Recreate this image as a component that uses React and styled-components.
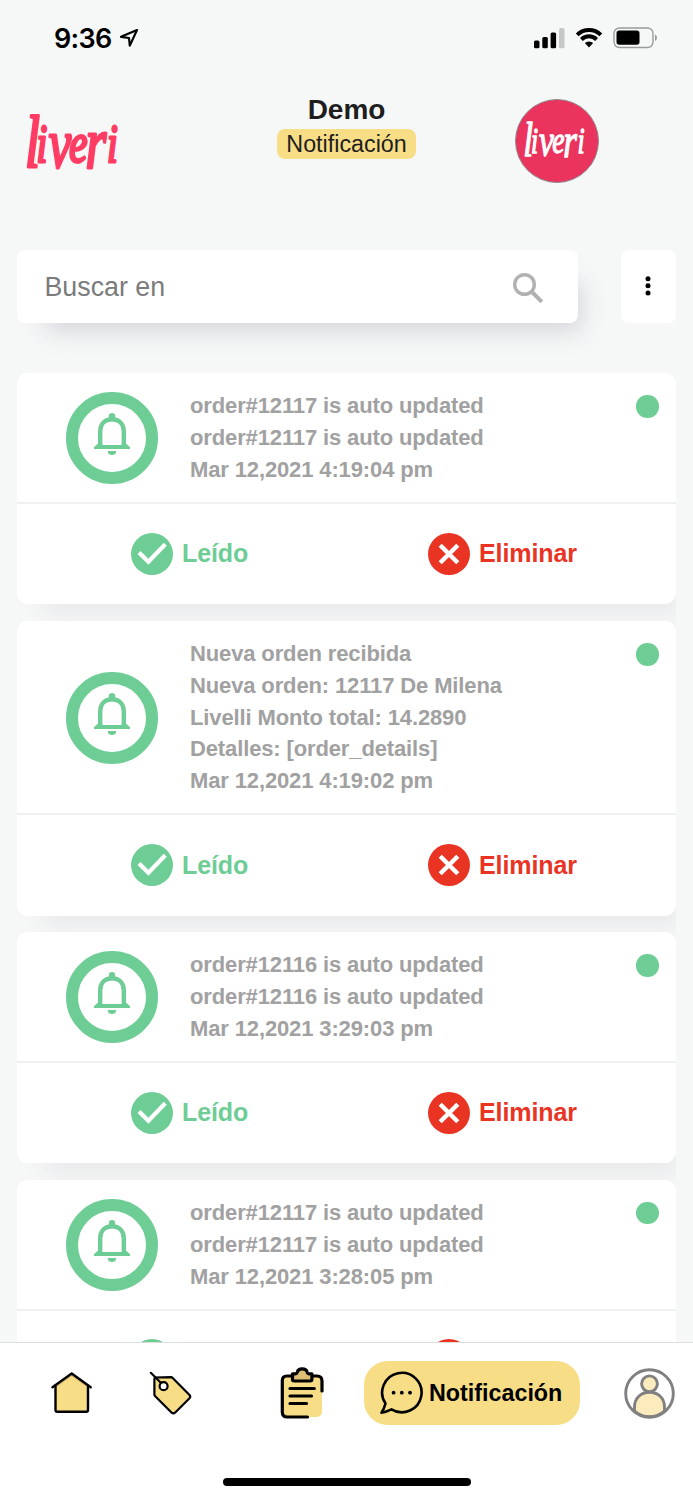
import React from 'react'
import styled, { createGlobalStyle, ThemeProvider } from 'styled-components'

const theme = {
  background: '#f6f8f8',
  green: '#6dcd95',
  red: '#e93323',
  yellow: '#f8dd87',
  pink: '#ff3d64',
  muted: '#a1a1a1',
}

const GlobalStyle = createGlobalStyle`
  * {
    box-sizing: border-box;
  }

  body {
    margin: 0;
    font-family: 'Liberation Sans', Arial, sans-serif;
  }

  svg {
    display: block;
    flex: none;
  }
`

const Screen = styled.div`
  display: flex;
  flex-direction: column;
  width: 693px;
  height: 1500px;
  overflow: hidden;
  background: ${({ theme }) => theme.background};
`

const StatusBar = styled.div`
  display: flex;
  align-items: center;
  justify-content: space-between;
  height: 77px;
  padding: 0 35px 1px 54px;
`

const Clock = styled.div`
  display: flex;
  align-items: center;
  gap: 7px;
  font-family: Inter, sans-serif;
  font-size: 27px;
  font-weight: 600;
  letter-spacing: -0.7px;
  color: #000;
`

const Header = styled.header`
  display: flex;
  align-items: flex-start;
  height: 172.7px;
  padding: 17px 0 0 20px;
`

const LogoBox = styled.div`
  width: 112px;
  padding-top: 14px;
`

const TitleBlock = styled.div`
  display: flex;
  flex-direction: column;
  align-items: center;
  width: 138.5px;
  margin-left: 145.3px;
`

const Title = styled.h1`
  margin: 0;
  font-size: 28px;
  line-height: 32px;
  color: #1e1e1e;
`

const Badge = styled.span`
  width: 100%;
  margin-top: 3px;
  border-radius: 8px;
  background: ${({ theme }) => theme.yellow};
  color: #1e1e1e;
  font-size: 23.3px;
  line-height: 30px;
  text-align: center;
`

const BrandAvatar = styled.div`
  display: flex;
  align-items: center;
  justify-content: center;
  width: 84px;
  height: 84px;
  margin: 4.6px 0 0 99.4px;
  border: 1px solid #8d8d92;
  border-radius: 50%;
  background: #ea335d;
`

const SearchRow = styled.div`
  display: flex;
  justify-content: space-between;
  height: 73.3px;
  margin: 0 17px 50.4px;
`

const SearchBox = styled.div`
  display: flex;
  align-items: center;
  justify-content: space-between;
  width: 560.5px;
  padding: 3px 33.5px 0 27.5px;
  border-radius: 8px;
  background: #fff;
  box-shadow: 16px 20px 25px -12px rgba(50, 50, 70, 0.17);
  color: #7b7b7b;
  font-size: 26.8px;
`

const MenuButton = styled.button`
  display: flex;
  align-items: center;
  justify-content: center;
  width: 55px;
  padding: 0 1px 0 0;
  border: 0;
  border-radius: 8px;
  background: #fff;
`

const List = styled.main`
  display: flex;
  flex: 1;
  flex-direction: column;
  gap: 16.7px;
  min-height: 0;
  margin: 0 17px;
  overflow: hidden;
`

const Card = styled.article`
  flex: none;
  border-radius: 11px;
  background: #fff;
  box-shadow: 16px 20px 25px -12px rgba(50, 50, 70, 0.09);
`

const CardBody = styled.div`
  display: flex;
  align-items: center;
  padding: 17px 17.4px 16.4px 49px;
`

const BellRing = styled.div`
  display: flex;
  align-items: center;
  justify-content: center;
  width: 92px;
  height: 92px;
  border: 12.5px solid ${({ theme }) => theme.green};
  border-radius: 50%;
`

const Message = styled.div`
  flex: 1;
  margin-left: 32px;
  color: ${({ theme }) => theme.muted};
  font-size: 22px;
  font-weight: 700;
  letter-spacing: -0.13px;
  line-height: 31.8px;
`

const UnreadDot = styled.span`
  align-self: flex-start;
  width: 22.5px;
  height: 22.5px;
  margin-top: 5px;
  border-radius: 50%;
  background: ${({ theme }) => theme.green};
`

const Actions = styled.div`
  display: grid;
  grid-template-columns: 297px 1fr;
  align-items: center;
  height: 102.2px;
  padding: 0 0 1px 114px;
  border-top: 2px solid #eff1f1;
`

const Action = styled.div`
  display: flex;
  align-items: center;
  gap: 9px;
  color: ${({ theme, $tone }) => theme[$tone]};
  font-size: 25px;
  font-weight: 700;
  letter-spacing: -0.1px;
`

const BottomBar = styled.footer`
  display: flex;
  flex-direction: column;
  align-items: center;
  height: 158px;
  border-top: 1px solid #dcdede;
  background: #fff;
`

const Tabs = styled.nav`
  display: flex;
  align-items: center;
  width: 100%;
  height: 64px;
  margin-top: 18px;
  padding-left: 49px;
`

const Tab = styled.div`
  flex: none;
  margin-left: ${({ $gap }) => $gap}px;
`

const ActiveTab = styled.div`
  display: flex;
  flex: none;
  align-items: center;
  gap: 6px;
  width: 216px;
  height: 64px;
  margin-left: 39.5px;
  padding-left: 15px;
  border-radius: 24px;
  background: ${({ theme }) => theme.yellow};
  color: #000;
  font-size: 23.3px;
  font-weight: 700;
`

const HomeIndicator = styled.div`
  width: 248px;
  height: 8.4px;
  margin-top: 53px;
  border-radius: 5px;
  background: #000;
`

const Wordmark = ({ width, color, weight }) => (
  <svg width={width} height={width * 0.625} viewBox="0 0 112 70" overflow="visible">
    <text
      x="7 23 40 68 91 121"
      y="59 54 59 54 60 54"
      transform="scale(0.72 1)"
      fill={color}
      stroke={color}
      strokeWidth={weight}
      strokeLinejoin="round"
      fontFamily="'Liberation Serif', serif"
      fontStyle="italic"
      fontSize="75"
    >
      l<tspan fontSize="54">i</tspan>
      <tspan fontSize="70">v</tspan>
      <tspan fontSize="58">e</tspan>
      <tspan fontSize="74">r</tspan>
      <tspan fontSize="54">i</tspan>
    </text>
  </svg>
)

const LocationArrow = () => (
  <svg width="20" height="20" viewBox="0 0 20 20">
    <path
      d="M18 2L2 8.8l8 1.2.8 7.6z"
      fill="none"
      stroke="#000"
      strokeWidth="2.2"
      strokeLinejoin="round"
    />
  </svg>
)

const StatusIcons = () => (
  <svg width="124" height="22" viewBox="0 0 124 22">
    <rect x="0" y="13.5" width="5.5" height="7.8" rx="1.5" />
    <rect x="8.3" y="10" width="5.5" height="11.3" rx="1.5" />
    <rect x="16.6" y="5.4" width="5.5" height="15.9" rx="1.5" />
    <rect x="25" y="1" width="5.5" height="20.3" rx="1.5" fill="#c6c8c8" />
    <g fill="none" stroke="#000" strokeWidth="4">
      <path d="M43.2 7.8a16.8 16.8 0 0 1 23.6 0" />
      <path d="M47.4 12.5a10.8 10.8 0 0 1 15.2 0" />
    </g>
    <path d="M50.8 16.1a6 6 0 0 1 8.4 0L55 20.5z" />
    <rect x="80" y="1" width="39" height="19.5" rx="5.5" fill="none" stroke="#999b9b" strokeWidth="1.4" />
    <rect x="82.5" y="3.6" width="23" height="14.2" rx="2.8" />
    <path d="M121 7.5q2 1 2 3.3t-2 3.3z" fill="#999b9b" />
  </svg>
)

const SearchIcon = () => (
  <svg width="32" height="32" viewBox="0 0 32 32" fill="none" stroke="#b1b1b1">
    <circle cx="12.5" cy="12.5" r="9.8" strokeWidth="3.4" />
    <path d="M19.5 19.5l10.3 10.4" strokeWidth="4" />
  </svg>
)

const DotsIcon = () => (
  <svg width="6" height="22" viewBox="0 0 6 22">
    <circle cx="3" cy="3.7" r="2.5" />
    <circle cx="3" cy="10.8" r="2.5" />
    <circle cx="3" cy="18" r="2.5" />
  </svg>
)

const BellIcon = () => (
  <svg width="36" height="54" viewBox="0 0 36 54" fill={theme.green}>
    <circle cx="18" cy="5.2" r="3.2" />
    <path
      d="M6.2 36V20.5C6.2 12.8 11 8.2 18 8.2s11.8 4.6 11.8 12.3V36"
      fill="none"
      stroke={theme.green}
      strokeWidth="4.4"
    />
    <path d="M4.6 32L0 36.2v1.7h36v-1.7L31.4 32l-3 2H7.6z" />
    <path d="M13.8 40h8.4a4.2 4 0 0 1-8.4 0z" />
  </svg>
)

const CheckCircle = () => (
  <svg width="42" height="42" viewBox="0 0 42 42">
    <circle cx="21" cy="21" r="21" fill={theme.green} />
    <path d="M8 19.5l9.4 9.3L34.3 11.3" fill="none" stroke="#fff" strokeWidth="4.2" />
  </svg>
)

const CrossCircle = () => (
  <svg width="42" height="42" viewBox="0 0 42 42">
    <circle cx="21" cy="21" r="21" fill={theme.red} />
    <path d="M12.2 12.2l17.6 17.6M29.8 12.2L12.2 29.8" stroke="#fff" strokeWidth="4.4" />
  </svg>
)

const HomeIcon = () => (
  <svg width="46" height="46" viewBox="0 0 46 46">
    <path d="M6.5 15L22.7 4l16.4 11v24.5q0 2-2 2H8.5q-2 0-2-2z" fill={theme.yellow} />
    <path d="M8 17L22.7 6.5 37.4 17v-3L22.7 3.5 8 14z" fill="#dcbf73" />
    <g fill="none" stroke="#000" strokeWidth="2.4" strokeLinecap="round" strokeLinejoin="round">
      <path d="M3.5 17.2L22.7 3.6l19 13.6" />
      <path d="M6.5 15.6V40q0 1.8 1.8 1.8h28.9q1.8 0 1.8-1.8V15.6" />
    </g>
  </svg>
)

const TagIcon = () => (
  <svg width="46" height="46" viewBox="0 0 46 46">
    <g stroke="#000" strokeWidth="2.2" strokeLinecap="round" strokeLinejoin="round">
      <path
        d="M7 7.5l16-.4q1 0 1.7.8L41.5 25q1.5 1.6 0 3.2L27 42.7q-1.7 1.4-3.3 0L7 26q-.6-.6-.6-1.5V9z"
        fill={theme.yellow}
      />
      <path d="M2.8 2.8l10.5 10.5" />
      <circle cx="15.6" cy="16.2" r="4" fill="#fff" />
    </g>
  </svg>
)

const ClipboardIcon = () => (
  <svg width="46" height="54" viewBox="0 0 46 54">
    <rect x="3.5" y="10" width="39.5" height="41" rx="5" fill={theme.yellow} />
    <g fill="none" stroke="#000" strokeWidth="3.2" strokeLinecap="round" strokeLinejoin="round">
      <path d="M14 10H8q-4.7 0-4.7 4.7V46q0 5 5 5H28.5" />
      <path d="M32 10h6q5 0 5 5v10" />
      <path
        d="M13.5 7.8h3q1.4 0 1.8-1.8.6-3.2 4.9-3.2T28.1 6q.4 1.8 1.8 1.8h3V13.3q0 1.7-1.7 1.7H15.2q-1.7 0-1.7-1.7z"
        fill="#dcbf73"
      />
      <path d="M11 22.5h24.3M11 30h21.5M11 37.5h16.5" />
    </g>
  </svg>
)

const ChatIcon = () => (
  <svg width="44" height="44" viewBox="0 0 44 44">
    <path
      d="M6.5 32.5A19.7 19.7 0 1 1 12.5 38.3Q7 41 2.5 41.8 5.2 37.5 6.5 32.5z"
      fill="none"
      stroke="#000"
      strokeWidth="2.6"
      strokeLinejoin="round"
    />
    <circle cx="14.6" cy="21.7" r="1.9" />
    <circle cx="22.8" cy="21.7" r="1.9" />
    <circle cx="31" cy="21.7" r="1.9" />
  </svg>
)

const ProfileIcon = () => (
  <svg width="51" height="51" viewBox="0 0 51 51" fill="#fcebbd" stroke="#808080" strokeWidth="2.9">
    <path d="M10.5 43V39C10.5 30 17 24.2 25.5 24.2S40.5 30 40.5 39v4q-6.5 5.7-15 5.7T10.5 43z" />
    <circle cx="25.5" cy="15.8" r="7.9" />
    <circle cx="25.5" cy="25.5" r="23.8" fill="none" />
  </svg>
)

const notifications = [
  ['order#12117 is auto updated', 'order#12117 is auto updated', 'Mar 12,2021 4:19:04 pm'],
  [
    'Nueva orden recibida',
    'Nueva orden: 12117 De Milena',
    'Livelli Monto total: 14.2890',
    'Detalles: [order_details]',
    'Mar 12,2021 4:19:02 pm',
  ],
  ['order#12116 is auto updated', 'order#12116 is auto updated', 'Mar 12,2021 3:29:03 pm'],
  ['order#12117 is auto updated', 'order#12117 is auto updated', 'Mar 12,2021 3:28:05 pm'],
]

const Notification = ({ lines }) => (
  <Card>
    <CardBody>
      <BellRing>
        <BellIcon />
      </BellRing>
      <Message>
        {lines.map((line, i) => (
          <div key={i}>{line}</div>
        ))}
      </Message>
      <UnreadDot />
    </CardBody>
    <Actions>
      <Action $tone="green">
        <CheckCircle />
        Leído
      </Action>
      <Action $tone="red">
        <CrossCircle />
        Eliminar
      </Action>
    </Actions>
  </Card>
)

const App = () => {
  return (
    <ThemeProvider theme={theme}>
      <GlobalStyle />
      <Screen>
        <StatusBar>
          <Clock>
            9:36
            <LocationArrow />
          </Clock>
          <StatusIcons />
        </StatusBar>
        <Header>
          <LogoBox>
            <Wordmark width={112} color={theme.pink} weight={3} />
          </LogoBox>
          <TitleBlock>
            <Title>Demo</Title>
            <Badge>Notificación</Badge>
          </TitleBlock>
          <BrandAvatar>
            <Wordmark width={74} color="#fff" weight={2} />
          </BrandAvatar>
        </Header>
        <SearchRow>
          <SearchBox>
            Buscar en
            <SearchIcon />
          </SearchBox>
          <MenuButton aria-label="Menu">
            <DotsIcon />
          </MenuButton>
        </SearchRow>
        <List>
          {notifications.map((lines, i) => (
            <Notification key={i} lines={lines} />
          ))}
        </List>
        <BottomBar>
          <Tabs>
            <Tab $gap={0}>
              <HomeIcon />
            </Tab>
            <Tab $gap={52.5}>
              <TagIcon />
            </Tab>
            <Tab $gap={85}>
              <ClipboardIcon />
            </Tab>
            <ActiveTab>
              <ChatIcon />
              Notificación
            </ActiveTab>
            <Tab $gap={43.5}>
              <ProfileIcon />
            </Tab>
          </Tabs>
          <HomeIndicator />
        </BottomBar>
      </Screen>
    </ThemeProvider>
  )
}

export default App
